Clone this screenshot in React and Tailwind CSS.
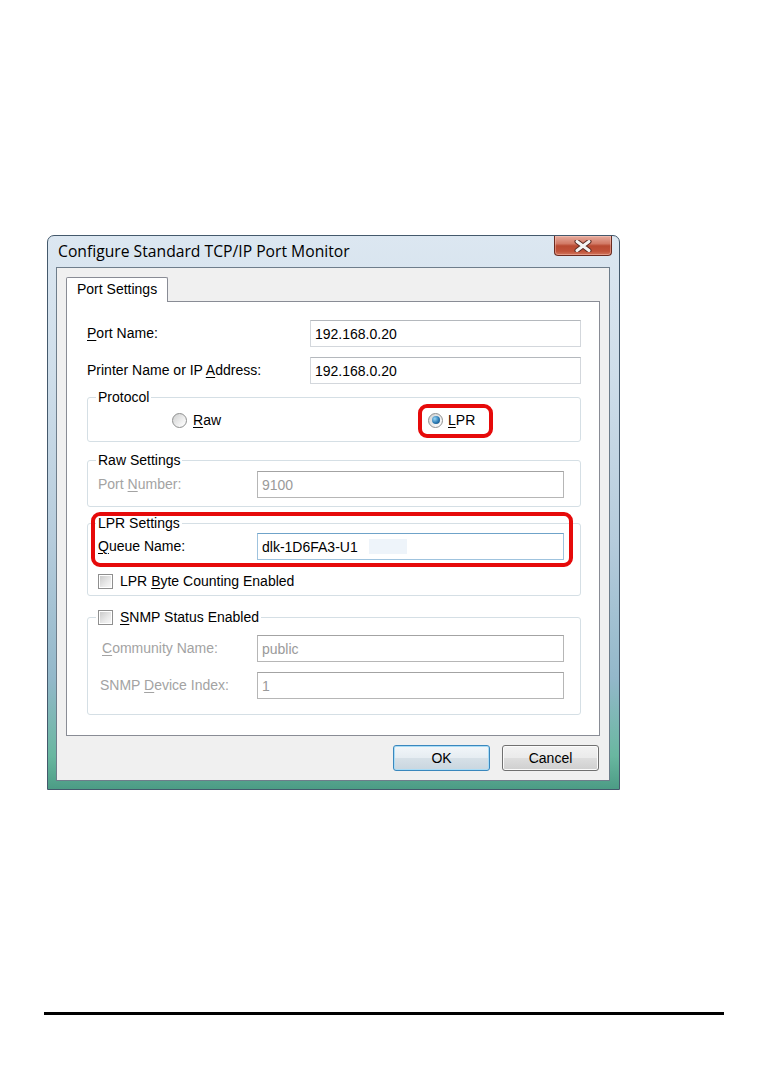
import React from "react";

// Accelerator letter, underlined like a Win32 dialog mnemonic
function Key({ children }) {
  return <span className="underline decoration-1 underline-offset-[2px]">{children}</span>;
}

function TextBox({ value, tone = "normal", width, children }) {
  const tones = {
    normal: "border-[#d3d7dc] border-t-[#b4b8bd] text-black",
    disabled: "border-[#b6b6b6] border-t-[#a3a3a3] text-[#9a9a9a]",
    focus: "border-[#9fc3de] border-t-[#6fa3c9] text-black",
  };
  return (
    <div
      className={`flex h-[27px] items-center border bg-white pl-[4px] leading-[16px] ${tones[tone]}`}
      style={{ width }}
    >
      {value}
      {children}
    </div>
  );
}

function Radio({ checked }) {
  return (
    <span className="flex h-[15px] w-[15px] shrink-0 items-center justify-center rounded-full border border-[#8e8f8f] bg-[linear-gradient(135deg,#cfd0d0,#f4f4f4_70%,#ffffff)]">
      {checked && (
        <span className="h-[8px] w-[8px] rounded-full bg-[radial-gradient(circle_at_35%_35%,#9ad7f6,#2a7ab4_55%,#123f66)]" />
      )}
    </span>
  );
}

function Checkbox() {
  return (
    <span className="flex h-[15px] w-[15px] shrink-0 items-center justify-center border border-[#8f8f8f] bg-white">
      <span className="h-[11px] w-[11px] bg-[linear-gradient(135deg,#cbcbcb,#e9e9e9_60%,#f7f7f7)]" />
    </span>
  );
}

function GroupBox({ title, className = "", children }) {
  return (
    <div className={`relative w-[494px] rounded-[3px] border border-[#d5dfe5] ${className}`}>
      <div className="-mt-[9px] ml-[8px] flex h-[16px] w-fit items-center bg-white px-[2px] leading-[16px]">
        {title}
      </div>
      {children}
    </div>
  );
}

function FieldRow({ label, labelWidth, muted, indent = 0, children }) {
  return (
    <div className="flex h-[27px] items-center">
      <div
        className={`mb-[2px] shrink-0 leading-[16px] ${muted ? "text-[#a3a3a3]" : ""}`}
        style={{ width: labelWidth, paddingLeft: indent }}
      >
        {label}
      </div>
      {children}
    </div>
  );
}

function CloseButton() {
  return (
    <div className="-mr-[2px] flex h-[20px] w-[58px] items-center justify-center rounded-b-[4px] border border-t-0 border-[#6b2a1f] bg-[linear-gradient(#e6ab9d,#d27a66_40%,#b94a32_52%,#c05239_80%,#d2775e)] shadow-[inset_0_0_0_1px_rgba(255,210,200,0.4)]">
      <svg width="18" height="12" viewBox="0 0 18 12">
        <path d="M3 1.5 L15 10.5 M15 1.5 L3 10.5" stroke="#5a2a22" strokeWidth="5" strokeLinecap="round" />
        <path d="M3 1.5 L15 10.5 M15 1.5 L3 10.5" stroke="#f4f4f4" strokeWidth="3" strokeLinecap="round" />
      </svg>
    </div>
  );
}

function DialogButton({ children, primary }) {
  return (
    <div
      className={`flex h-[26px] w-[97px] items-center justify-center rounded-[3px] border leading-[16px] ${
        primary
          ? "border-[#3a87bd] bg-[linear-gradient(#f2f6f9,#e6edf2_48%,#d6e0e7_52%,#c9d6df)] shadow-[inset_0_0_0_1px_#a9dcf6]"
          : "border-[#707070] bg-[linear-gradient(#f2f2f2,#ebebeb_48%,#dddddd_52%,#cfcfcf)] shadow-[inset_0_0_0_1px_#fbfbfb]"
      }`}
    >
      {children}
    </div>
  );
}

function PortMonitorDialog() {
  return (
    <div className="ml-[3px] flex h-[555px] w-[573px] flex-col rounded-t-[7px] border border-[#44596c] bg-[linear-gradient(180deg,#dce7f1_0%,#cfdeea_25%,#b6ccdc_55%,#93b8ca_80%,#69b7a0_94%,#4c9c85_100%)] pb-[8px] pl-[8px] pr-[9px]">
      {/* title bar */}
      <div className="flex h-[31px] shrink-0 items-start justify-between">
        <div className="pl-[2px] pt-[5px] font-['Open_Sans',sans-serif] text-[15.7px] leading-[21px] text-black">
          Configure Standard TCP/IP Port Monitor
        </div>
        <CloseButton />
      </div>

      {/* client area */}
      <div className="flex flex-1 flex-col border border-[#6e7d8b] bg-[#f0f0f0] px-[9px] pt-[9px]">
        <div className="flex">
          <div className="relative z-10 -mb-px h-[25px] w-[102px] rounded-t-[2px] border border-b-0 border-[#898c95] bg-white pl-[10px] leading-[23px]">
            Port Settings
          </div>
        </div>

        <div className="flex h-[435px] flex-col border border-[#898c95] bg-white pl-[20px] pr-[17px] pt-[18px]">
          <FieldRow label={<><Key>P</Key>ort Name:</>} labelWidth={223}>
            <TextBox value="192.168.0.20" width={271} />
          </FieldRow>
          <div className="mt-[10px]">
            <FieldRow label={<>Printer Name or IP <Key>A</Key>ddress:</>} labelWidth={223}>
              <TextBox value="192.168.0.20" width={271} />
            </FieldRow>
          </div>

          <GroupBox title="Protocol" className="mt-[13px]">
            <div className="mb-[13px] mt-[7px] flex h-[16px] items-center pl-[84px]">
              <div className="flex w-[256px] items-center gap-[6px]">
                <Radio />
                <span className="leading-[16px]"><Key>R</Key>aw</span>
              </div>
              <div className="relative flex items-center gap-[5px]">
                <Radio checked />
                <span className="leading-[16px]"><Key>L</Key>PR</span>
                <span className="pointer-events-none absolute -bottom-[10px] -left-[10px] -right-[18px] -top-[8px] rounded-[9px] border-[4px] border-[#e60a0a]" />
              </div>
            </div>
          </GroupBox>

          <GroupBox title="Raw Settings" className="mt-[18px]">
            <div className="pb-[8px] pl-[10px] pr-[16px] pt-[3px]">
              <FieldRow label={<>Port <Key>N</Key>umber:</>} labelWidth={159} muted>
                <TextBox value="9100" tone="disabled" width={307} />
              </FieldRow>
            </div>
          </GroupBox>

          <GroupBox title="LPR Settings" className="mt-[16px]">
            <div className="pb-[6px] pl-[10px] pr-[16px] pt-[2px]">
              <FieldRow label={<><Key>Q</Key>ueue Name:</>} labelWidth={159}>
                <TextBox value="dlk-1D6FA3-U1" tone="focus" width={307}>
                  <span className="ml-[11px] h-[15px] w-[38px] bg-[#eef4fa]" />
                </TextBox>
              </FieldRow>
              <div className="mt-[13px] flex h-[16px] items-center gap-[7px]">
                <Checkbox />
                <span className="leading-[16px]">LPR <Key>B</Key>yte Counting Enabled</span>
              </div>
            </div>
            <span className="pointer-events-none absolute left-[3px] top-[-12px] h-[55px] w-[482px] rounded-[9px] border-[4px] border-[#e60a0a]" />
          </GroupBox>

          <GroupBox
            title={
              <span className="flex items-center gap-[7px]">
                <Checkbox />
                <span><Key>S</Key>NMP Status Enabled</span>
              </span>
            }
            className="mt-[21px]"
          >
            <div className="flex flex-col gap-[10px] pb-[15px] pl-[10px] pr-[16px] pt-[10px]">
              <FieldRow label={<><Key>C</Key>ommunity Name:</>} labelWidth={159} indent={4} muted>
                <TextBox value="public" tone="disabled" width={307} />
              </FieldRow>
              <FieldRow label={<>SNMP <Key>D</Key>evice Index:</>} labelWidth={159} indent={2} muted>
                <TextBox value="1" tone="disabled" width={307} />
              </FieldRow>
            </div>
          </GroupBox>
        </div>

        <div className="mt-[9px] flex justify-end gap-[12px] pr-[1px]">
          <DialogButton primary>OK</DialogButton>
          <DialogButton>Cancel</DialogButton>
        </div>
      </div>
    </div>
  );
}

export default function App() {
  return (
    <div className="min-h-[1081px] w-[768px] bg-white pl-[44px] pt-[235px] font-['Liberation_Sans',Arial,sans-serif] text-[14px] text-black">
      <PortMonitorDialog />
      <div className="mt-[222px] h-[3px] w-[680px] bg-black" />
    </div>
  );
}
